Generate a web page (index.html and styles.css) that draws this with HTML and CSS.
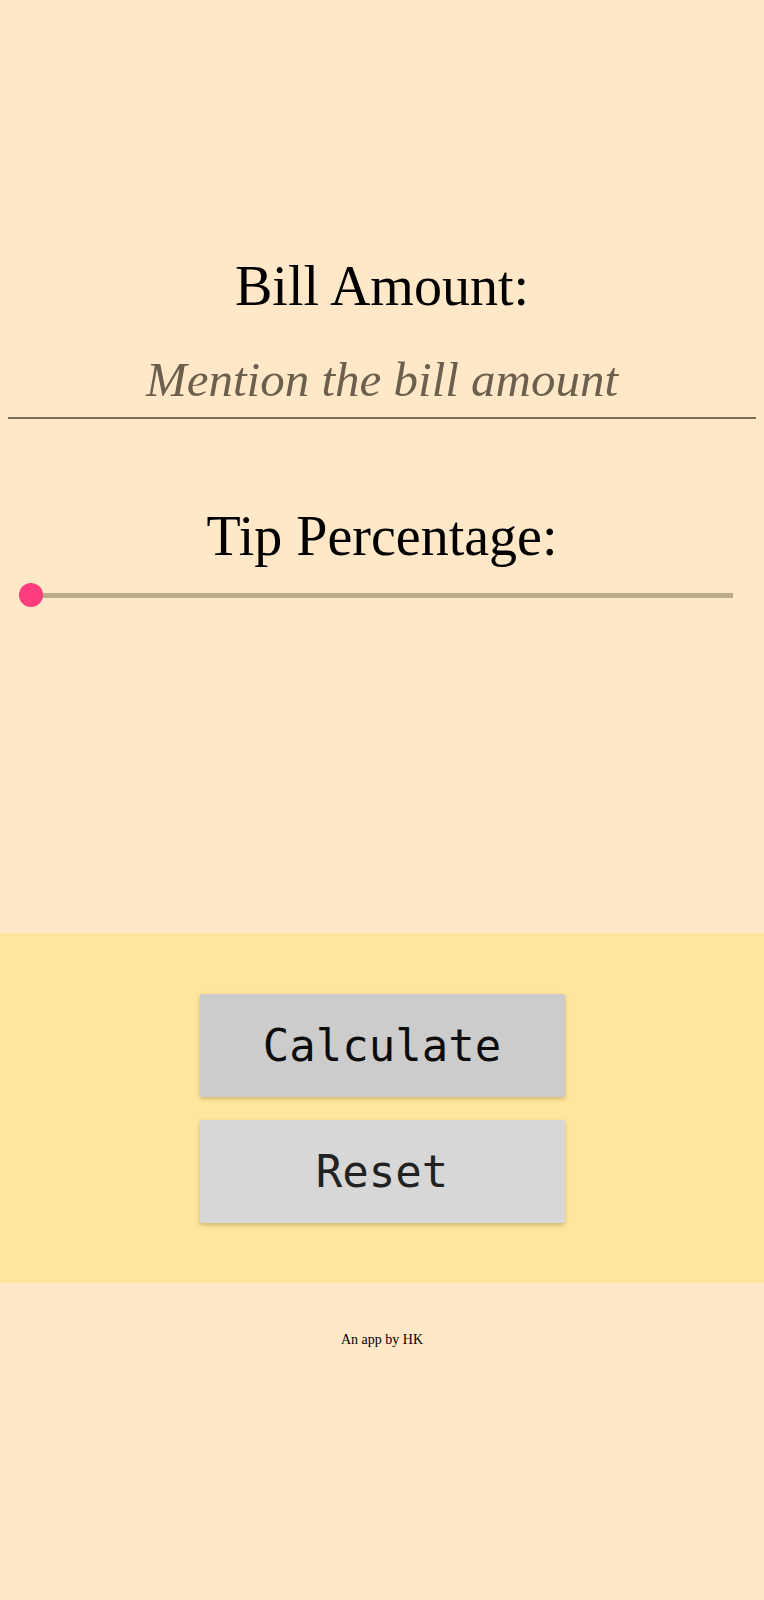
FILE: index.html
```html
<!DOCTYPE html>
<html lang="en">
<head>
<meta charset="utf-8">
<title>Tip Calculator</title>
<link rel="stylesheet" href="styles.css">
</head>
<body>
  <main class="app">
    <section class="inputs">
      <h2 class="label">Bill Amount:</h2>
      <input class="bill" type="text" placeholder="Mention the bill amount">
      <h2 class="label tip-label">Tip Percentage:</h2>
      <input class="slider" type="range" min="0" max="100" value="0">
    </section>
    <section class="actions">
      <button class="btn btn-calc">Calculate</button>
      <button class="btn btn-reset">Reset</button>
    </section>
    <footer class="footer">An app by HK</footer>
  </main>
</body>
</html>
```
FILE: styles.css
```css
html, body {
  margin: 0;
  padding: 0;
  background: #ffe8c7;
}
body {
  min-height: 1600px;
  font-family: "Liberation Serif", serif;
}
.app {
  display: flex;
  flex-direction: column;
}
.inputs {
  padding: 254px 8px 0;
  height: 933px;
  box-sizing: border-box;
  display: flex;
  flex-direction: column;
  align-items: center;
}
.label {
  margin: 0;
  font-weight: 400;
  font-size: 56px;
  line-height: 64px;
  color: #000;
}
.bill {
  width: 100%;
  box-sizing: border-box;
  margin-top: 30px;
  border: none;
  border-bottom: 2px solid #7b6c57;
  background: transparent;
  font-family: "Liberation Serif", serif;
  font-style: italic;
  font-size: 49px;
  height: 71px;
  padding: 0 0 7px;
  text-align: center;
  color: #222;
  outline: none;
}
.bill::placeholder {
  color: #6b5f4e;
  font-style: italic;
}
.tip-label {
  margin-top: 85px;
}
.slider {
  -webkit-appearance: none;
  appearance: none;
  align-self: flex-start;
  margin: 15px 0 0 11px;
  width: 714px;
  height: 24px;
  background: transparent;
}
.slider::-webkit-slider-runnable-track {
  height: 5px;
  background: #bcab8a;
}
.slider::-webkit-slider-thumb {
  -webkit-appearance: none;
  appearance: none;
  width: 24px;
  height: 24px;
  border-radius: 50%;
  background: #ff3d7e;
  margin-top: -9.5px;
  border: none;
}
.actions {
  background: #ffe69e;
  height: 350px;
  box-sizing: border-box;
  padding-top: 61px;
  display: flex;
  flex-direction: column;
  align-items: center;
  gap: 23px;
}
.btn {
  width: 365px;
  height: 103px;
  border: none;
  border-radius: 2px;
  font-family: "DejaVu Sans Mono", monospace;
  font-size: 44px;
  color: #111;
  box-shadow: 0 2px 4px rgba(120, 90, 20, 0.35);
  cursor: pointer;
}
.btn-calc {
  background: #cccccc;
  color: #0c0c0c;
}
.btn-reset {
  background: #d6d7d6;
  color: #222;
}
.footer {
  text-align: center;
  font-size: 14px;
  margin-top: 49px;
  color: #000;
}
```
